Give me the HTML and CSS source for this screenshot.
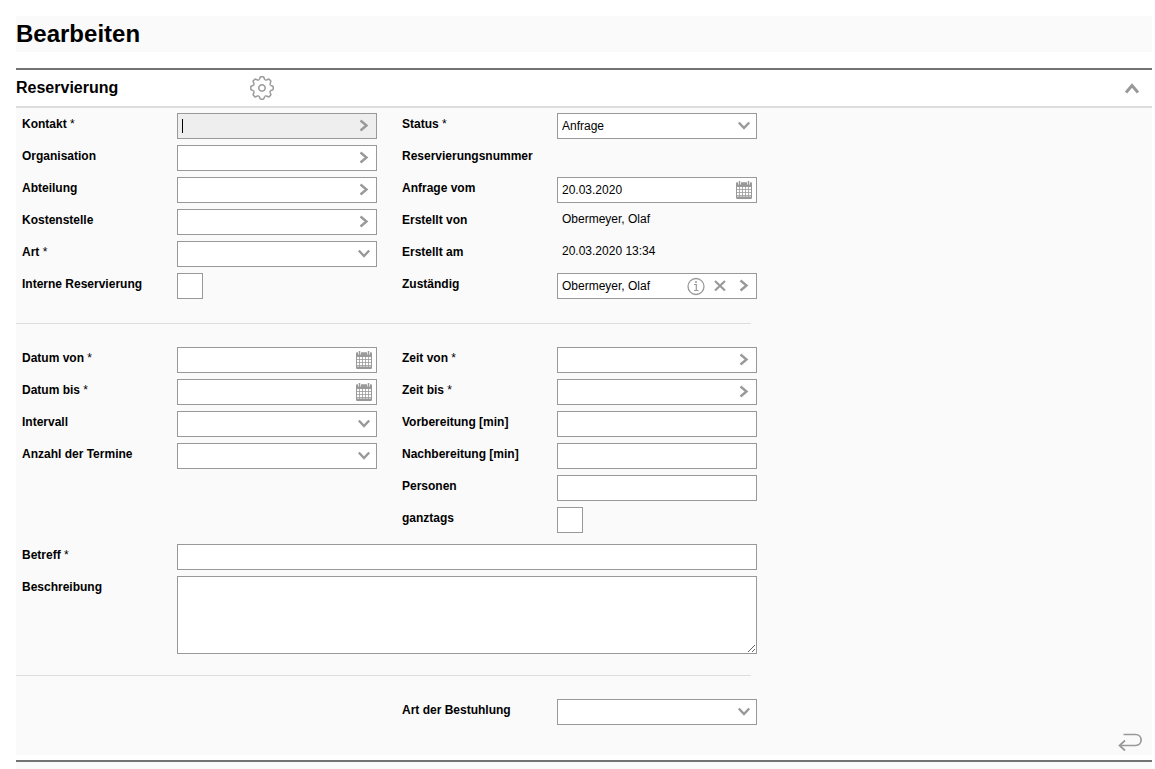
FILE: index.html
```html
<!DOCTYPE html>
<html lang="de">
<head>
<meta charset="utf-8">
<title>Reservierung bearbeiten</title>
<link rel="stylesheet" href="styles.css">
</head>
<body>
<svg class="sprite" aria-hidden="true">
  <symbol id="right" viewBox="0 0 24 24"><path d="M8.500 6.500l6 5-6 5" fill="none" stroke="currentColor" stroke-width="2.400"/></symbol>
  <symbol id="down" viewBox="0 0 24 24"><path d="M6.800 8.500l5.200 5.500 5.200-5.500" fill="none" stroke="currentColor" stroke-width="2.400"/></symbol>
  <symbol id="up" viewBox="0 0 24 24"><path d="M6 16.500l6-7 6 7" fill="none" stroke="currentColor" stroke-width="3"/></symbol>
  <symbol id="close" viewBox="0 0 24 24"><path d="M7 7l10 9.500M17 7L7 16.500" fill="none" stroke="currentColor" stroke-width="2.200"/></symbol>
  <symbol id="info" viewBox="0 0 24 24"><g fill="none" stroke="currentColor"><circle cx="12" cy="12.500" r="8" stroke-width="1.300"/><path d="M10 10.500h2.300v6M10 16.500h4.500" stroke-width="1.200"/></g><circle cx="12" cy="8" r="1" fill="currentColor"/></symbol>
  <symbol id="calendar" viewBox="0 0 24 24"><rect x="4.500" y="5" width="15" height="15.500" rx="1" fill="none" stroke="currentColor"/><path d="M4 4.500h16V9H4zM4 18.500h16V20l-1 1H5l-1-1z" fill="currentColor"/><path d="M7.500 9v11M10.500 9v11M13.500 9v11M16.500 9v11M4 11.500h16M4 14.500h16M4 17.500h16" fill="none" stroke="currentColor" stroke-width=".8"/><path d="M7.500 3v3.500M16.500 3v3.500" stroke="#fff" stroke-width="3"/><path d="M7.500 3v4M16.500 3v4" stroke="currentColor" stroke-width="1.500"/></symbol>
  <symbol id="gear" viewBox="-12 -12 24 24">
    <g fill="none" stroke="currentColor" stroke-width="1.500" stroke-linejoin="round">
      <circle r="3.200"/>
      <path id="tooth" d="M-2.900-8.600Q-2.200-9-2-10.300-1.800-11.200-1-11.200H1Q1.800-11.200 2-10.300 2.200-9 2.900-8.600 3.500-7.900 4.030-8.130"/>
      <use href="#tooth" transform="rotate(45)"/><use href="#tooth" transform="rotate(90)"/><use href="#tooth" transform="rotate(135)"/><use href="#tooth" transform="rotate(180)"/><use href="#tooth" transform="rotate(225)"/><use href="#tooth" transform="rotate(270)"/><use href="#tooth" transform="rotate(315)"/>
    </g>
  </symbol>
  <symbol id="return" viewBox="0 0 24 24"><path d="M5.500 4.500h12c7.500 0 7.500 11 0 11H1.500M7 10.500l-5.500 5L7 20.500" fill="none" stroke="currentColor" stroke-width="1.700"/></symbol>
</svg>

<header class="title"><h1>Bearbeiten</h1></header>

<section class="panel">
  <div class="panel-head">
    <h2>Reservierung</h2>
    <button class="icon" type="button" aria-label="Einstellungen"><svg><use href="#gear"/></svg></button>
    <button class="icon collapse" type="button" aria-label="Einklappen"><svg><use href="#up"/></svg></button>
  </div>
  <form class="panel-body">
    <div class="group">
      <div class="column">
        <div class="row"><label for="kontakt">Kontakt <i>*</i></label><div class="field active"><input id="kontakt" type="text"><span class="caret"></span><button class="icon" type="button" aria-label="Kontakt suchen"><svg><use href="#right"/></svg></button></div></div>
        <div class="row"><label for="organisation">Organisation</label><div class="field"><input id="organisation" type="text"><button class="icon" type="button" aria-label="Organisation suchen"><svg><use href="#right"/></svg></button></div></div>
        <div class="row"><label for="abteilung">Abteilung</label><div class="field"><input id="abteilung" type="text"><button class="icon" type="button" aria-label="Abteilung suchen"><svg><use href="#right"/></svg></button></div></div>
        <div class="row"><label for="kostenstelle">Kostenstelle</label><div class="field"><input id="kostenstelle" type="text"><button class="icon" type="button" aria-label="Kostenstelle suchen"><svg><use href="#right"/></svg></button></div></div>
        <div class="row"><label for="art">Art <i>*</i></label><div class="field"><select id="art"><option></option></select><svg class="arrow"><use href="#down"/></svg></div></div>
        <div class="row"><label for="intern">Interne Reservierung</label><input class="check" id="intern" type="checkbox"></div>
      </div>
      <div class="column">
        <div class="row"><label for="status">Status <i>*</i></label><div class="field"><select id="status"><option>Anfrage</option></select><svg class="arrow"><use href="#down"/></svg></div></div>
        <div class="row"><span class="label">Reservierungsnummer</span></div>
        <div class="row"><label for="anfrage">Anfrage vom</label><div class="field"><input id="anfrage" type="text" value="20.03.2020"><button class="icon" type="button" aria-label="Datum wählen"><svg><use href="#calendar"/></svg></button></div></div>
        <div class="row"><span class="label">Erstellt von</span><span class="value">Obermeyer, Olaf</span></div>
        <div class="row"><span class="label">Erstellt am</span><span class="value">20.03.2020 13:34</span></div>
        <div class="row"><label for="zustaendig">Zuständig</label><div class="field"><input id="zustaendig" type="text" value="Obermeyer, Olaf"><button class="icon" type="button" aria-label="Information"><svg><use href="#info"/></svg></button><button class="icon" type="button" aria-label="Entfernen"><svg><use href="#close"/></svg></button><button class="icon" type="button" aria-label="Zuständige suchen"><svg><use href="#right"/></svg></button></div></div>
      </div>
    </div>
    <hr>
    <div class="group">
      <div class="column">
        <div class="row"><label for="datum-von">Datum von <i>*</i></label><div class="field"><input id="datum-von" type="text"><button class="icon" type="button" aria-label="Datum von wählen"><svg><use href="#calendar"/></svg></button></div></div>
        <div class="row"><label for="datum-bis">Datum bis <i>*</i></label><div class="field"><input id="datum-bis" type="text"><button class="icon" type="button" aria-label="Datum bis wählen"><svg><use href="#calendar"/></svg></button></div></div>
        <div class="row"><label for="intervall">Intervall</label><div class="field"><select id="intervall"><option></option></select><svg class="arrow"><use href="#down"/></svg></div></div>
        <div class="row"><label for="anzahl">Anzahl der Termine</label><div class="field"><select id="anzahl"><option></option></select><svg class="arrow"><use href="#down"/></svg></div></div>
      </div>
      <div class="column">
        <div class="row"><label for="zeit-von">Zeit von <i>*</i></label><div class="field"><input id="zeit-von" type="text"><button class="icon" type="button" aria-label="Zeit von wählen"><svg><use href="#right"/></svg></button></div></div>
        <div class="row"><label for="zeit-bis">Zeit bis <i>*</i></label><div class="field"><input id="zeit-bis" type="text"><button class="icon" type="button" aria-label="Zeit bis wählen"><svg><use href="#right"/></svg></button></div></div>
        <div class="row"><label for="vorbereitung">Vorbereitung [min]</label><div class="field"><input id="vorbereitung" type="text"></div></div>
        <div class="row"><label for="nachbereitung">Nachbereitung [min]</label><div class="field"><input id="nachbereitung" type="text"></div></div>
        <div class="row"><label for="personen">Personen</label><div class="field"><input id="personen" type="text"></div></div>
        <div class="row"><label for="ganztags">ganztags</label><input class="check" id="ganztags" type="checkbox"></div>
      </div>
    </div>
    <div class="column wide">
      <div class="row"><label for="betreff">Betreff <i>*</i></label><div class="field"><input id="betreff" type="text"></div></div>
      <div class="row"><label for="beschreibung">Beschreibung</label><textarea id="beschreibung"></textarea></div>
    </div>
    <hr>
    <div class="group">
      <div class="column"></div>
      <div class="column">
        <div class="row"><label for="bestuhlung">Art der Bestuhlung</label><div class="field"><select id="bestuhlung"><option></option></select><svg class="arrow"><use href="#down"/></svg></div></div>
      </div>
    </div>
    <div class="actions"><button class="icon" type="button" aria-label="Zurück"><svg><use href="#return"/></svg></button></div>
  </form>
</section>
<footer class="page-end"></footer>
</body>
</html>
```
FILE: styles.css
```css
* { box-sizing: border-box; }
body {
  margin: 0;
  padding: 16px 3px 0 16px;
  background: #fff;
  color: #000;
  font: 12px/22px "Liberation Sans", Arial, sans-serif;
}
.sprite { display: none; }
.title { background: #fafafa; margin-bottom: 16px; }
h1 { margin: 0; font-size: 24px; line-height: 36px; }
h2 { margin: 0; width: 234px; font-size: 16px; line-height: 36px; }
.panel { border-top: 2px solid #737373; border-bottom: 2px solid #737373; padding-bottom: 5px; }
.panel-head {
  display: flex;
  align-items: center;
  height: 38px;
  padding-right: 8px;
  border-bottom: 2px solid #ddd;
}
.panel-head h2 { align-self: flex-start; }
.collapse { margin-left: auto; }
.panel-body { background: #fafafa; padding: 5px 10px 1px 6px; }
.group { display: flex; gap: 25px; }
.column { display: flex; flex-direction: column; gap: 6px; width: 355px; }
.wide { width: 735px; margin-top: 11px; }
.row { display: flex; min-height: 26px; }
label, .label { flex: 0 0 155px; font-weight: bold; }
label i { font-style: normal; font-weight: normal; }
.value { padding-left: 5px; line-height: 20px; }
.field {
  position: relative;
  display: flex;
  flex: 1;
  min-width: 0;
  height: 26px;
  background: #fff;
  border: 1px solid #999;
}
.active { background: #eee; }
.field input, select {
  flex: 1;
  min-width: 0;
  margin: 0;
  padding: 0 4px;
  border: 0;
  outline: 0;
  background: transparent;
  color: #000;
  font: inherit;
  appearance: none;
}
.caret { position: absolute; left: 4px; top: 5px; width: 1px; height: 14px; background: #000; }
.icon {
  flex: 0 0 24px;
  width: 24px;
  height: 24px;
  padding: 0;
  border: 0;
  background: none;
  color: #999;
}
.icon svg, .arrow { display: block; width: 24px; height: 24px; color: #999; }
.arrow { position: absolute; right: 0; top: 0; pointer-events: none; }
.check {
  width: 26px;
  height: 26px;
  margin: 0;
  border: 1px solid #999;
  background: #fff;
  appearance: none;
}
.check:checked { background: #999; }
textarea {
  flex: 1;
  min-width: 0;
  height: 78px;
  padding: 4px;
  border: 1px solid #999;
  border-radius: 0;
  font: inherit;
}
hr {
  width: 735px;
  height: 1px;
  margin: 24px 0 23px -6px;
  border: 0;
  background: #ddd;
}
.wide + hr { margin-top: 21px; }
.actions { display: flex; justify-content: flex-end; margin-top: 5px; }
.page-end { height: 7px; background: #fafafa; }
```
